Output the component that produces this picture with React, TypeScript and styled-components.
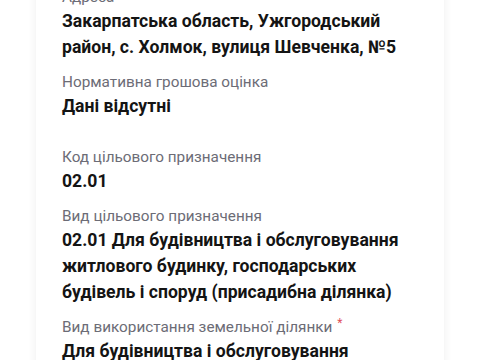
import React from "react"
import styled, { createGlobalStyle } from "styled-components"

const GlobalStyle = createGlobalStyle`
  html, body {
    margin: 0;
    padding: 0;
    background: #ffffff;
    overflow: hidden;
  }
  body {
    font-family: Roboto, "Noto Sans", sans-serif;
    -webkit-font-smoothing: antialiased;
  }
`

const Page = styled.div`
  width: 480px;
  height: 360px;
  overflow: hidden;
  padding: 0 36px;
  box-sizing: border-box;
`

const Card = styled.section`
  margin-top: -25px;
  padding: 12px 26px 24px;
  background: #ffffff;
  border-radius: 8px;
  box-shadow: 0 0 10px rgba(0, 0, 0, 0.07);
  display: flex;
  flex-direction: column;
`

const Field = styled.div<{ $extra?: number }>`
  display: flex;
  flex-direction: column;
  gap: 1px;
  margin-bottom: ${(p) => 12 + (p.$extra ?? 0)}px;
`

const Label = styled.span`
  font-size: 15.3px;
  line-height: 20px;
  color: #6c6c76;
  font-weight: 400;
`

const Required = styled.sup`
  color: #e0505a;
  font-size: 12px;
  line-height: 0;
  margin-left: 5px;
  vertical-align: 5px;
`

const Value = styled.span`
  font-size: 17.6px;
  line-height: 26px;
  font-weight: 700;
  color: #141414;
`

interface Item {
  label: string
  value: string
  required?: boolean
  extra?: number
}

const items: Item[] = [
  { label: "Адреса", value: "Закарпатська область, Ужгородський район, с. Холмок, вулиця Шевченка, №5" },
  { label: "Нормативна грошова оцінка", value: "Дані відсутні", extra: 16 },
  { label: "Код цільового призначення", value: "02.01" },
  {
    label: "Вид цільового призначення",
    value: "02.01 Для будівництва і обслуговування житлового будинку, господарських будівель і споруд (присадибна ділянка)",
  },
  {
    label: "Вид використання земельної ділянки",
    value: "Для будівництва і обслуговування житлового будинку",
    required: true,
  },
]

export default function App() {
  return (
    <>
      <GlobalStyle />
      <Page>
        <Card>
          {items.map((item) => (
            <Field key={item.label} $extra={item.extra}>
              <Label>
                {item.label}
                {item.required && <Required>*</Required>}
              </Label>
              <Value>{item.value}</Value>
            </Field>
          ))}
        </Card>
      </Page>
    </>
  )
}
